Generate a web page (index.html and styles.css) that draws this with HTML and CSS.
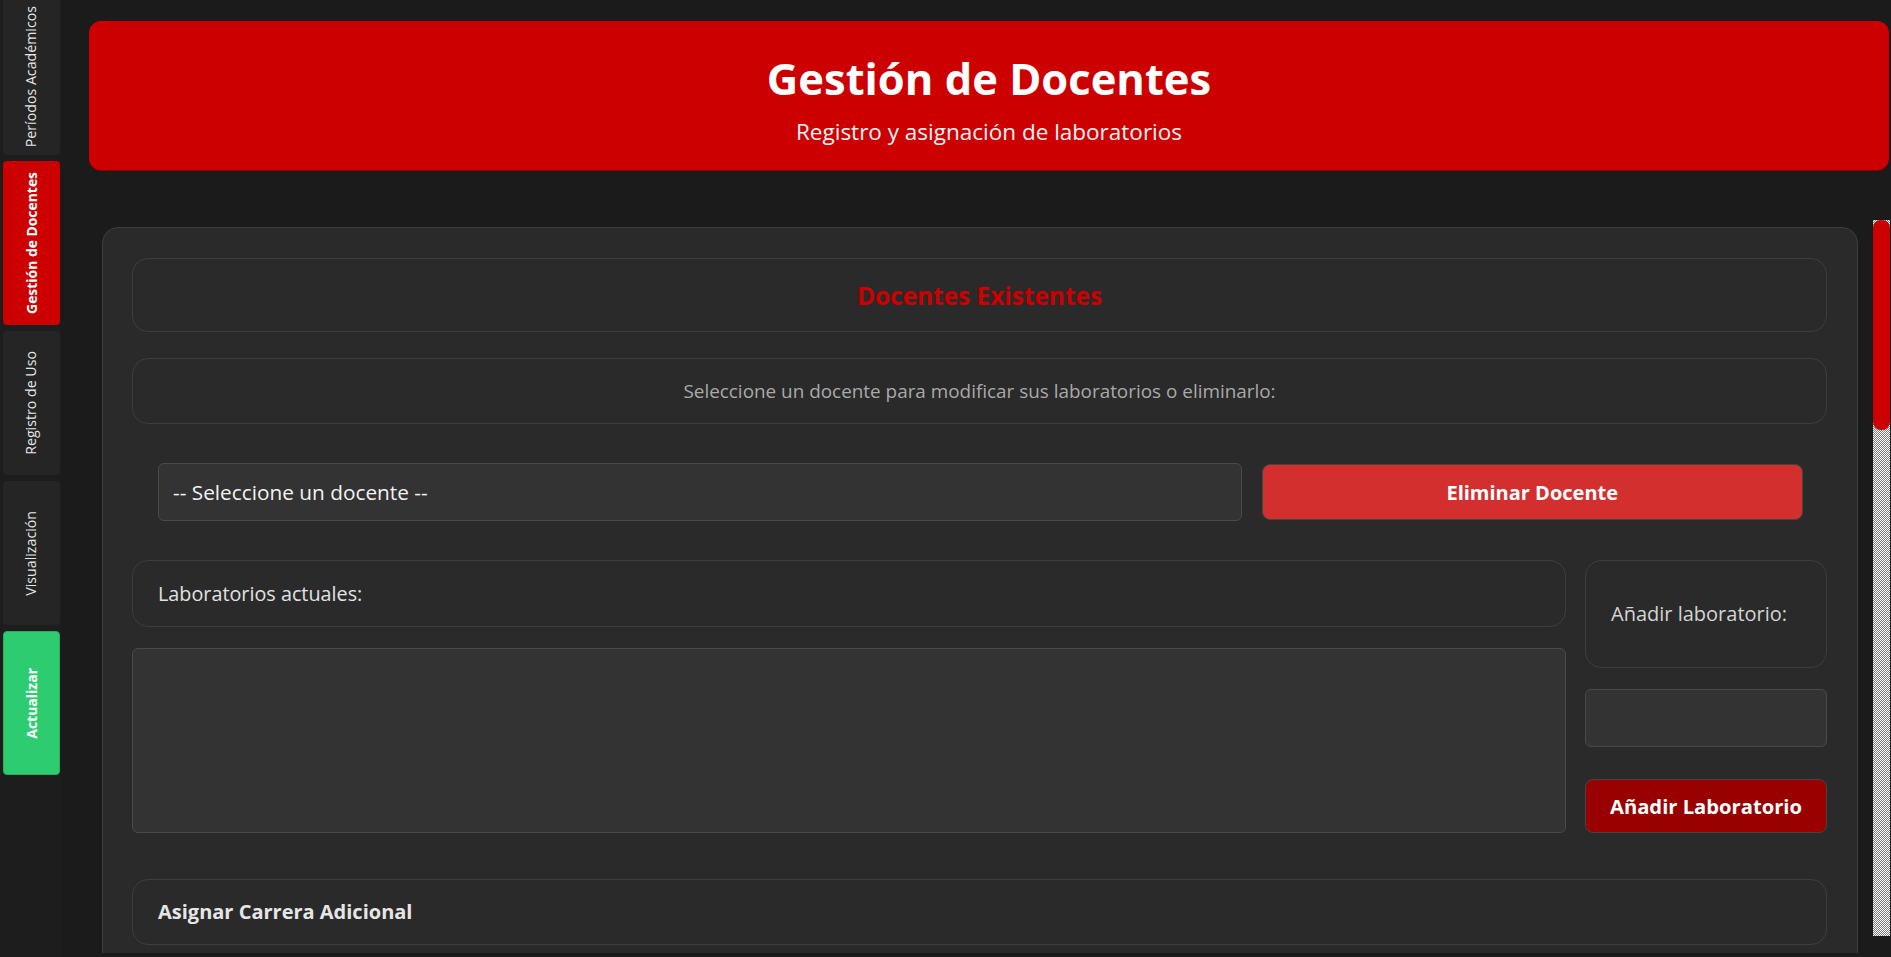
FILE: index.html
```html
<!DOCTYPE html>
<html lang="es">
<head>
<meta charset="utf-8">
<title>Gestión de Docentes</title>
<link rel="stylesheet" href="styles.css">
</head>
<body>
<div class="app">
  <aside class="sidebar">
    <nav class="nav">
      <div class="nav-btn nav-first"><span>Períodos Académicos</span></div>
      <div class="nav-btn nav-active"><span>Gestión de Docentes</span></div>
      <div class="nav-btn"><span>Registro de Uso</span></div>
      <div class="nav-btn"><span>Visualización</span></div>
      <div class="nav-btn nav-refresh"><span>Actualizar</span></div>
    </nav>
  </aside>
  <main class="main">
    <header class="header">
      <h1 class="title">Gestión de Docentes</h1>
      <p class="subtitle">Registro y asignación de laboratorios</p>
    </header>
    <div class="scroll-area">
      <div class="viewport">
        <section class="card">
          <div class="frame frame-title"><h2 class="section-title">Docentes Existentes</h2></div>
          <div class="frame frame-info"><p class="info">Seleccione un docente para modificar sus laboratorios o eliminarlo:</p></div>
          <div class="select-row">
            <div class="select">-- Seleccione un docente --</div>
            <button class="btn btn-delete">Eliminar Docente</button>
          </div>
          <div class="labs-row">
            <div class="labs-left">
              <div class="frame frame-label"><span class="label">Laboratorios actuales:</span></div>
              <div class="list"></div>
            </div>
            <div class="labs-right">
              <div class="frame frame-add"><span class="label label-add">Añadir laboratorio:</span></div>
              <div class="input"></div>
              <button class="btn btn-add">Añadir Laboratorio</button>
            </div>
          </div>
          <div class="frame frame-carrera"><span class="label-bold">Asignar Carrera Adicional</span></div>
        </section>
      </div>
      <div class="scrollbar"><div class="thumb"></div></div>
    </div>
  </main>
</div>
</body>
</html>
```

FILE: styles.css
```css
* { box-sizing: border-box; }
html, body { margin: 0; padding: 0; }
body {
  background: #1b1b1b;
  font-family: "Open Sans", "Noto Sans", sans-serif;
  color: #e0e0e0;
  overflow: hidden;
}
.app {
  display: flex;
  height: 957px;
}
.sidebar {
  width: 61px;
  flex: none;
  background: #1d1d1d;
  padding: 0 1px 0 3px;
  overflow: hidden;
}
.nav {
  display: flex;
  flex-direction: column;
  gap: 6px;
  margin-top: -8px;
}
.nav-btn {
  background: #252525;
  border-radius: 4px;
  min-height: 144px;
  padding: 11px 0;
  display: flex;
  align-items: center;
  justify-content: center;
  color: #e6e6e6;
  font-size: 14.2px;
}
.nav-first {
  padding: 14px 0 8px;
}
.nav-btn span {
  writing-mode: vertical-rl;
  transform: rotate(180deg);
  white-space: nowrap;
  line-height: 1;
}
.nav-active {
  background: #cc0000;
  color: #ffffff;
  font-weight: 700;
  font-size: 13.9px;
}
.nav-refresh {
  background: #2ecc71;
  color: #ffffff;
  font-weight: 700;
  font-size: 14px;
  border: 1px solid #27ae60;
}
.main {
  flex: 1;
  display: flex;
  flex-direction: column;
  padding: 21px 0 4px 28px;
  min-width: 0;
}
.header {
  height: 149px;
  margin-right: 2px;
  background: #cc0000;
  border-radius: 12px;
  box-shadow: 0 1px 0 #8e0000;
  padding-top: 32px;
  text-align: center;
  color: #ffffff;
}
.title {
  margin: 0;
  font-size: 43.5px;
  line-height: 52px;
  font-weight: 700;
}
.subtitle {
  margin: 12px 0 0;
  font-size: 22.5px;
  line-height: 30px;
  font-weight: 400;
  color: #f4f4f4;
}
.scroll-area {
  flex: 1;
  margin-top: 50px;
  display: flex;
  min-height: 0;
}
.viewport {
  flex: 1;
  overflow: hidden;
  padding: 7px 15px 0 13px;
}
.card {
  background: #2a2a2a;
  border: 1px solid #3c3c3c;
  border-radius: 16px;
  padding: 30px 30px 40px 29px;
  display: flex;
  flex-direction: column;
}
.frame {
  border: 1px solid #3e3e3e;
  border-radius: 16px;
  background: #2a2a2a;
  display: flex;
  align-items: center;
}
.frame-title {
  height: 74px;
  justify-content: center;
}
.section-title {
  margin: 0;
  color: #cc0000;
  font-size: 24.4px;
  font-weight: 700;
}
.frame-info {
  height: 66px;
  margin-top: 26px;
  justify-content: center;
}
.info {
  margin: 0;
  font-size: 18.9px;
  color: #a9a9a9;
}
.select-row {
  margin-top: 39px;
  padding: 0 24px 0 26px;
  display: flex;
  align-items: center;
  gap: 19.5px;
  height: 58px;
}
.select {
  flex: 0 0 1084px;
  height: 58px;
  background: #333333;
  border: 1px solid #4a4a4a;
  border-radius: 6px;
  display: flex;
  align-items: center;
  padding-left: 14px;
  font-size: 20.8px;
  color: #f2f2f2;
}
.btn {
  font-family: inherit;
  color: #ffffff;
  font-weight: 700;
  border: 1px solid #444444;
  border-radius: 8px;
  cursor: pointer;
  padding: 0;
}
.btn-delete {
  flex: 1 1 0;
  height: 56px;
  background: #d32f2f;
  font-size: 20px;
}
.labs-row {
  margin-top: 38.6px;
  display: flex;
  gap: 19.5px;
}
.labs-left {
  flex: 1;
  display: flex;
  flex-direction: column;
  gap: 21px;
}
.frame-label {
  height: 67px;
  padding-left: 25px;
}
.label {
  font-size: 19.8px;
  color: #e2e2e2;
}
.list {
  height: 185px;
  background: #333333;
  border: 1px solid #4a4a4a;
  border-radius: 6px;
}
.labs-right {
  width: 242px;
  flex: none;
  display: flex;
  flex-direction: column;
  gap: 21px;
}
.frame-add {
  height: 108px;
  padding-left: 25px;
}
.label-add {
  font-size: 20px;
  color: #d4d4d4;
}
.input {
  height: 58px;
  background: #333333;
  border: 1px solid #4a4a4a;
  border-radius: 6px;
}
.btn-add {
  margin-top: auto;
  height: 54px;
  background: #990000;
  font-size: 20.2px;
}
.frame-carrera {
  margin-top: 46px;
  height: 66.5px;
  padding-left: 25px;
}
.label-bold {
  font-size: 20px;
  font-weight: 700;
  color: #e6e6e6;
}
.scrollbar {
  width: 17px;
  flex: none;
  margin-right: 1px;
  height: 716px;
  background: repeating-conic-gradient(#ffffff 0 25%, #7a7a7a 0 50%) 0 0 / 2px 2px;
}
.thumb {
  height: 210px;
  background: #cc0000;
  border-radius: 8px;
}
```
